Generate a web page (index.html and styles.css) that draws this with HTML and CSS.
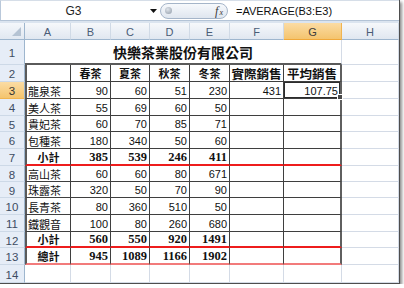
FILE: index.html
```html
<!DOCTYPE html>
<html lang="zh-Hant">
<head>
<meta charset="utf-8">
<title>快樂茶業股份有限公司</title>
<link rel="stylesheet" href="styles.css">
</head>
<body>
<div class="window">
  <div class="formula-bar">
    <div class="name-box">G3</div>
    <div class="name-arrow"><svg width="7" height="4" viewBox="0 0 7 4"><path d="M0 0H7L3.5 4Z" fill="#111"/></svg></div>
    <div class="fx-pill"><span class="pill-dot"></span><span class="fx"><i>f</i><i class="fx-x">x</i></span></div>
    <div class="formula">=AVERAGE(B3:E3)</div>
  </div>
  <div class="bar-gap"></div>
  <div class="sheet">
    <div class="corner"><span class="corner-tri"></span></div>
    <div class="ch">A</div><div class="ch">B</div><div class="ch">C</div><div class="ch">D</div><div class="ch">E</div><div class="ch">F</div><div class="ch sel">G</div><div class="ch">H</div>

    <div class="rh">1</div>
    <div class="title">快樂茶業股份有限公司</div>
    <div class="c"></div>

    <div class="rh">2</div>
    <div class="t first"></div><div class="t hd">春茶</div><div class="t hd">夏茶</div><div class="t hd">秋茶</div><div class="t hd">冬茶</div><div class="t hd wide">實際銷售</div><div class="t hd wide last">平均銷售</div>
    <div class="c"></div>

    <div class="rh sel">3</div>
    <div class="t first lbl">龍泉茶</div><div class="t">90</div><div class="t">60</div><div class="t">51</div><div class="t">230</div><div class="t">431</div><div class="t last active">107.75</div>
    <div class="c"></div>

    <div class="rh">4</div>
    <div class="t first lbl">美人茶</div><div class="t">55</div><div class="t">69</div><div class="t">60</div><div class="t">50</div><div class="t"></div><div class="t last"></div>
    <div class="c"></div>

    <div class="rh">5</div>
    <div class="t first lbl">貴妃茶</div><div class="t">60</div><div class="t">70</div><div class="t">85</div><div class="t">71</div><div class="t"></div><div class="t last"></div>
    <div class="c"></div>

    <div class="rh">6</div>
    <div class="t first lbl">包種茶</div><div class="t">180</div><div class="t">340</div><div class="t">50</div><div class="t">60</div><div class="t"></div><div class="t last"></div>
    <div class="c"></div>

    <div class="rh">7</div>
    <div class="t first sub red">小計</div><div class="t b red">385</div><div class="t b red">539</div><div class="t b red">246</div><div class="t b red">411</div><div class="t red"></div><div class="t last red"></div>
    <div class="c"></div>

    <div class="rh">8</div>
    <div class="t first lbl">高山茶</div><div class="t">60</div><div class="t">60</div><div class="t">80</div><div class="t">671</div><div class="t"></div><div class="t last"></div>
    <div class="c"></div>

    <div class="rh">9</div>
    <div class="t first lbl">珠露茶</div><div class="t">320</div><div class="t">50</div><div class="t">70</div><div class="t">90</div><div class="t"></div><div class="t last"></div>
    <div class="c"></div>

    <div class="rh">10</div>
    <div class="t first lbl">長青茶</div><div class="t">80</div><div class="t">360</div><div class="t">510</div><div class="t">50</div><div class="t"></div><div class="t last"></div>
    <div class="c"></div>

    <div class="rh">11</div>
    <div class="t first lbl">鐵觀音</div><div class="t">100</div><div class="t">80</div><div class="t">260</div><div class="t">680</div><div class="t"></div><div class="t last"></div>
    <div class="c"></div>

    <div class="rh">12</div>
    <div class="t first sub red">小計</div><div class="t b red">560</div><div class="t b red">550</div><div class="t b red">920</div><div class="t b red">1491</div><div class="t red"></div><div class="t last red"></div>
    <div class="c"></div>

    <div class="rh">13</div>
    <div class="t first sub pink">總計</div><div class="t b pink">945</div><div class="t b pink">1089</div><div class="t b pink">1166</div><div class="t b pink">1902</div><div class="t pink"></div><div class="t last pink"></div>
    <div class="c"></div>

    <div class="rh">14</div>
    <div class="c"></div><div class="c"></div><div class="c"></div><div class="c"></div><div class="c"></div><div class="c"></div><div class="c"></div><div class="c"></div>
  </div>
</div>
</body>
</html>
```
FILE: styles.css
```css
* { box-sizing: border-box; }

body {
  margin: 0;
  background: #fff;
  font-family: "Liberation Sans", "Noto Sans CJK TC", sans-serif;
}

.window {
  width: 400px;
  height: 284px;
  background: #fff;
  border-right: 1px solid #4e4e4e;
  border-bottom: 1px solid #4e4e4e;
  box-shadow: 2px 2px 3px rgba(0, 0, 0, 0.45);
  overflow: hidden;
  display: flex;
  flex-direction: column;
}

/* formula bar */
.formula-bar {
  flex: none;
  height: 21px;
  display: flex;
  align-items: center;
  border-top: 1px solid #d6dee8;
  border-bottom: 1px solid #b3c3d6;
  border-left: 1px solid #b9c8da;
  background: #fff;
}

.name-box {
  width: 145px;
  text-align: center;
  font-size: 12px;
  color: #1e1e1e;
  padding-top: 1px;
}

.name-arrow {
  width: 14px;
  display: flex;
  justify-content: center;
  align-items: center;
}

.fx-pill {
  width: 68px;
  height: 16px;
  border: 1px solid #a5b5c9;
  border-radius: 8px;
  background: linear-gradient(#f7f9fc, #dfe6ef);
  display: flex;
  align-items: center;
  justify-content: space-between;
  padding: 0 4px 0 4px;
}

.pill-dot {
  width: 7px;
  height: 7px;
  border-radius: 50%;
  background: radial-gradient(circle at 40% 35%, #dfe4ea, #8f9aa8);
}

.fx {
  font-family: "Liberation Serif", serif;
  font-size: 12px;
  color: #3a3a3a;
  line-height: 1;
}

.fx-x {
  font-size: 8px;
  margin-left: 1px;
}

.formula {
  flex: 1;
  padding-left: 8px;
  font-size: 11px;
  color: #111;
  padding-top: 1px;
}

.bar-gap {
  flex: none;
  height: 2px;
  background: #dbe4ef;
}

/* sheet grid */
.sheet {
  display: grid;
  grid-template-columns: 25px 46px 40px 39px 40px 40px 54px 58px 57px;
  grid-template-rows: 17px 25px 17px 17px 17px 16px 17px 17px 16px 16px 17px 17px 16px 17px 18px;
}

.corner {
  background: linear-gradient(#f4f7fb, #e1e8f1);
  border-right: 1px solid #9eb6ce;
  border-bottom: 1px solid #9eb6ce;
  position: relative;
}

.corner-tri {
  position: absolute;
  right: 3px;
  bottom: 3px;
  width: 0;
  height: 0;
  border-left: 9px solid transparent;
  border-bottom: 9px solid #b5c3d3;
}

.ch {
  background: linear-gradient(#f6f8fb, #e0e7f0);
  border-right: 1px solid #d0dae6;
  border-bottom: 1px solid #9eb6ce;
  font-size: 11px;
  color: #4a5c76;
  display: flex;
  align-items: center;
  justify-content: center;
  padding-top: 2px;
}

.ch.sel {
  background: linear-gradient(#fbdca4, #f4c46e);
  border-right-color: #f0b450;
  border-bottom-color: #f0a83a;
  color: #3d3d3d;
}

.rh {
  background: #e6edf7;
  border-right: 1px solid #9eb6ce;
  border-bottom: 1px solid #cdd9e7;
  font-size: 11.5px;
  color: #3d4c62;
  display: flex;
  align-items: center;
  justify-content: center;
  padding-top: 2px;
}

.rh.sel {
  background: linear-gradient(#fbdca4, #f4c46e);
  border-bottom-color: #f0b450;
  color: #333;
}

.c {
  border-right: 1px solid #d4dbe6;
  border-bottom: 1px solid #d4dbe6;
}

.title {
  grid-column: 2 / 9;
  border-right: 1px solid #d4dbe6;
  border-bottom: 2px solid #5a5a5a;
  display: flex;
  align-items: center;
  justify-content: center;
  font-family: "Noto Sans CJK TC", sans-serif;
  font-weight: 700;
  font-size: 14px;
  color: #111;
  padding-top: 1px;
}

/* table cells */
.t {
  border-right: 1px solid #3f3f3f;
  border-bottom: 1px solid #3f3f3f;
  display: flex;
  align-items: center;
  justify-content: flex-end;
  padding: 1px 2px 0 2px;
  font-size: 11px;
  color: #111;
  white-space: nowrap;
}

.t.first {
  border-left: 2px solid #5a5a5a;
}

.t.last {
  border-right: 2px solid #5f5f5f;
}

.hd {
  justify-content: center;
  font-family: "Noto Sans CJK TC", sans-serif;
  font-weight: 700;
  font-size: 11px;
  padding: 0;
}

.hd.wide {
  font-size: 12.5px;
}

.lbl {
  justify-content: flex-start;
  padding-left: 1px;
  font-family: "Noto Sans CJK TC", sans-serif;
}

.sub {
  justify-content: center;
  font-family: "Noto Sans CJK TC", sans-serif;
  font-weight: 700;
  padding: 0;
}

.b {
  font-family: "Liberation Serif", serif;
  font-weight: 700;
  font-size: 12.5px;
}

.red {
  border-bottom: 2px solid #ee1c1c;
}

.pink {
  border-bottom: 2px solid #f27b7b;
}

.active {
  position: relative;
  box-shadow: inset 0 0 0 1px #2c2c2c;
}

.active::after {
  content: "";
  position: absolute;
  z-index: 2;
  right: -3px;
  bottom: -2px;
  width: 4px;
  height: 4px;
  background: #4a4a4a;
  border: 1px solid #fff;
}
```
